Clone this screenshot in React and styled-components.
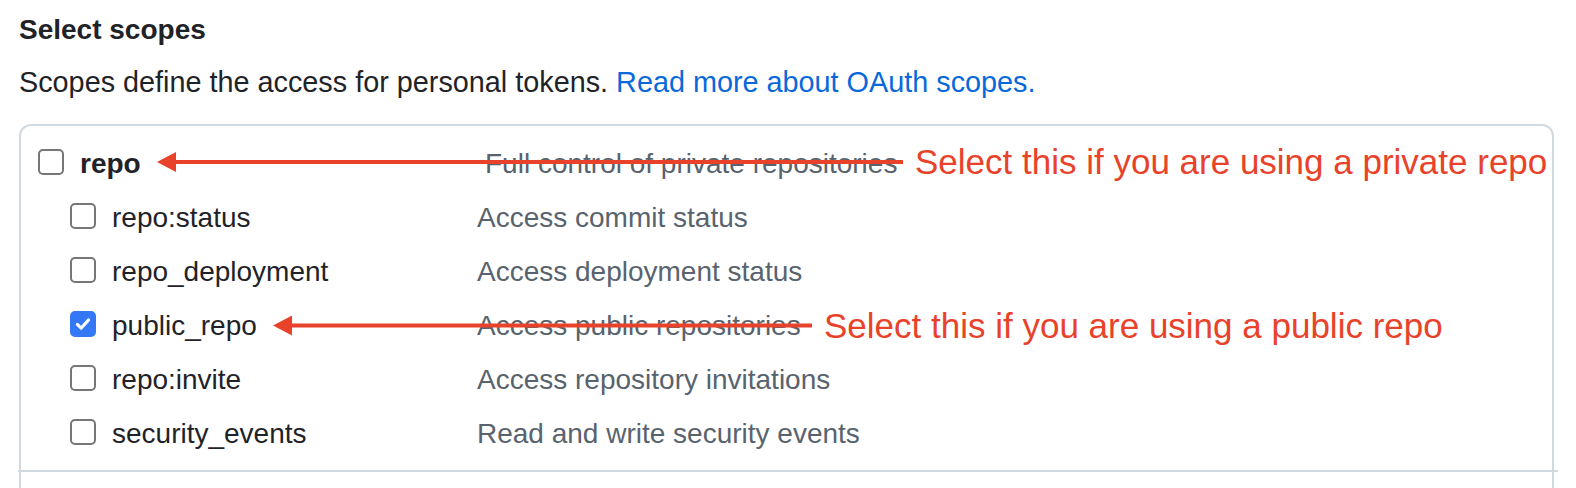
import React from 'react'
import styled, { createGlobalStyle } from 'styled-components'

const GlobalStyle = createGlobalStyle`
  html, body {
    margin: 0;
    padding: 0;
    background: #ffffff;
    overflow: hidden;
  }
  body {
    font-family: "Liberation Sans", Arial, sans-serif;
    color: #1f2328;
  }
`

const Page = styled.div`
  position: relative;
  width: 1576px;
  height: 488px;
  overflow: hidden;
  box-sizing: border-box;
  padding: 9px 0 0 19px;
`
const Title = styled.h3`
  margin: 0;
  font-size: 28px;
  font-weight: 700;
  line-height: 42px;
`
const Note = styled.p`
  margin: 10px 0 0;
  font-size: 28.8px;
  line-height: 42px;
  a {
    color: #0969da;
    text-decoration: none;
  }
`
const ScopeBox = styled.div`
  margin-top: 21px;
  width: 1535px;
  box-sizing: border-box;
  border: 2px solid #d1d9e0;
  border-radius: 12px;
  padding: 11px 0 48px;
`
const Row = styled.div`
  display: grid;
  grid-template-columns: ${p => (p.$child ? '407px' : '447px')} 1fr;
  align-items: center;
  height: 54px;
  padding-left: ${p => (p.$child ? '49px' : '17px')};
`
const ScopeLabel = styled.label`
  display: flex;
  align-items: center;
  gap: 16px;
  font-size: 28px;
  font-weight: ${p => (p.$bold ? 700 : 400)};
  color: #1f2328;
  white-space: nowrap;
`
const Box = styled.span`
  flex: none;
  display: grid;
  place-items: center;
  width: 26px;
  height: 26px;
  margin-top: -4px;
  box-sizing: border-box;
  border: 2px solid ${p => (p.$checked ? '#3478f6' : '#767676')};
  border-radius: 5px;
  background: ${p => (p.$checked ? '#3478f6' : '#ffffff')};
`
const Description = styled.span`
  font-size: 28px;
  color: #59636e;
  white-space: nowrap;
`
const Divider = styled.div`
  height: 2px;
  background: #d1d9e0;
  margin: 9px -6px 0 -3px;
`
const Overlay = styled.svg`
  position: absolute;
  top: 0;
  left: 0;
  pointer-events: none;
`
const Callout = styled.span`
  position: absolute;
  left: ${p => p.$left}px;
  top: ${p => p.$top}px;
  font-family: "Liberation Sans", Arial, sans-serif;
  font-size: 35px;
  line-height: 1;
  color: #e8432a;
  white-space: nowrap;
`

const scopes = [
  { name: 'repo', desc: 'Full control of private repositories', top: true },
  { name: 'repo:status', desc: 'Access commit status' },
  { name: 'repo_deployment', desc: 'Access deployment status' },
  { name: 'public_repo', desc: 'Access public repositories', checked: true },
  { name: 'repo:invite', desc: 'Access repository invitations' },
  { name: 'security_events', desc: 'Read and write security events' },
]

function Checkbox({ checked }) {
  return (
    <Box $checked={checked}>
      {checked && (
        <svg width="18" height="18" viewBox="0 0 24 24">
          <path d="M4.5 12.5l5 5L19.5 6.5" fill="none" stroke="#fff" strokeWidth="4" strokeLinecap="round" strokeLinejoin="round" />
        </svg>
      )}
    </Box>
  )
}

function Arrow({ tip, end, y }) {
  return (
    <g fill="#e8432a" stroke="#e8432a">
      <line x1={tip + 16} y1={y} x2={end} y2={y} strokeWidth="4" />
      <polygon points={`${tip},${y} ${tip + 19},${y - 10} ${tip + 19},${y + 10}`} stroke="none" />
    </g>
  )
}

export default function App() {
  return (
    <Page>
      <GlobalStyle />
      <Title>Select scopes</Title>
      <Note>
        Scopes define the access for personal tokens. <a href="#">Read more about OAuth scopes.</a>
      </Note>
      <ScopeBox>
        {scopes.map(s => (
          <Row key={s.name} $child={!s.top}>
            <ScopeLabel $bold={s.top}>
              <Checkbox checked={s.checked} />
              {s.name}
            </ScopeLabel>
            <Description>{s.desc}</Description>
          </Row>
        ))}
        <Divider />
      </ScopeBox>

      <Overlay width="1576" height="488">
        <Arrow tip={157} end={903} y={162} />
        <Arrow tip={273} end={812} y={325.5} />
      </Overlay>
      <Callout $left={915} $top={144}>Select this if you are using a private repo</Callout>
      <Callout $left={824} $top={308}>Select this if you are using a public repo</Callout>
    </Page>
  )
}
